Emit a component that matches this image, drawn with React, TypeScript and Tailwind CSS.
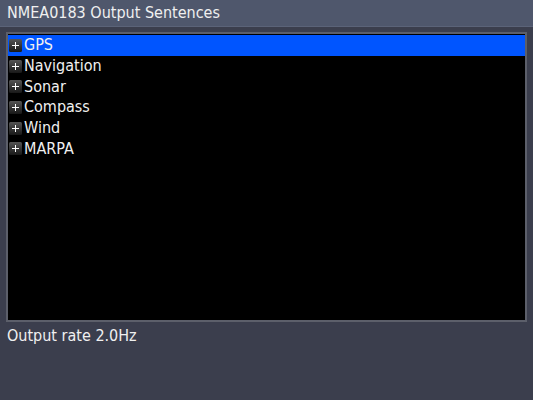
import React from "react";

const items = ["GPS", "Navigation", "Sonar", "Compass", "Wind", "MARPA"];

function PlusBox() {
  return (
    <svg width="13" height="13" viewBox="0 0 13 13" className="shrink-0">
      <defs>
        <linearGradient id="pg" x1="0" y1="0" x2="0" y2="1">
          <stop offset="0" stopColor="#555555" />
          <stop offset="1" stopColor="#181818" />
        </linearGradient>
      </defs>
      <rect x="0" y="0" width="13" height="13" rx="1.5" fill="url(#pg)" />
      <path d="M6.5 3v7M3 6.5h7" stroke="#ffffff" strokeWidth="1" />
    </svg>
  );
}

export default function App() {
  return (
    <div
      className="w-[533px] h-[400px] bg-[#3b3e4d] flex flex-col text-[#f0f0f0]"
      style={{ fontFamily: '"DejaVu Sans Condensed", "DejaVu Sans", sans-serif' }}
    >
      <div className="h-[27px] bg-[#4f576c] border-b border-[#5b6378] px-[7px] flex items-center text-[16px]">
        NMEA0183 Output Sentences
      </div>
      <div className="mx-[6px] mt-[5px] h-[290px] border-2 border-[#5c5f6a] bg-black pt-[1px]">
        {items.map((it, i) => (
          <div
            key={it}
            className={`h-[20.7px] flex items-center gap-[2px] pl-[1px] text-[16px] leading-none ${
              i === 0 ? "bg-[#0055ff]" : ""
            }`}
          >
            <PlusBox />
            <span>{it}</span>
          </div>
        ))}
      </div>
      <div className="px-[7px] mt-[4px] text-[16px] leading-[20px]">Output rate 2.0Hz</div>
    </div>
  );
}
